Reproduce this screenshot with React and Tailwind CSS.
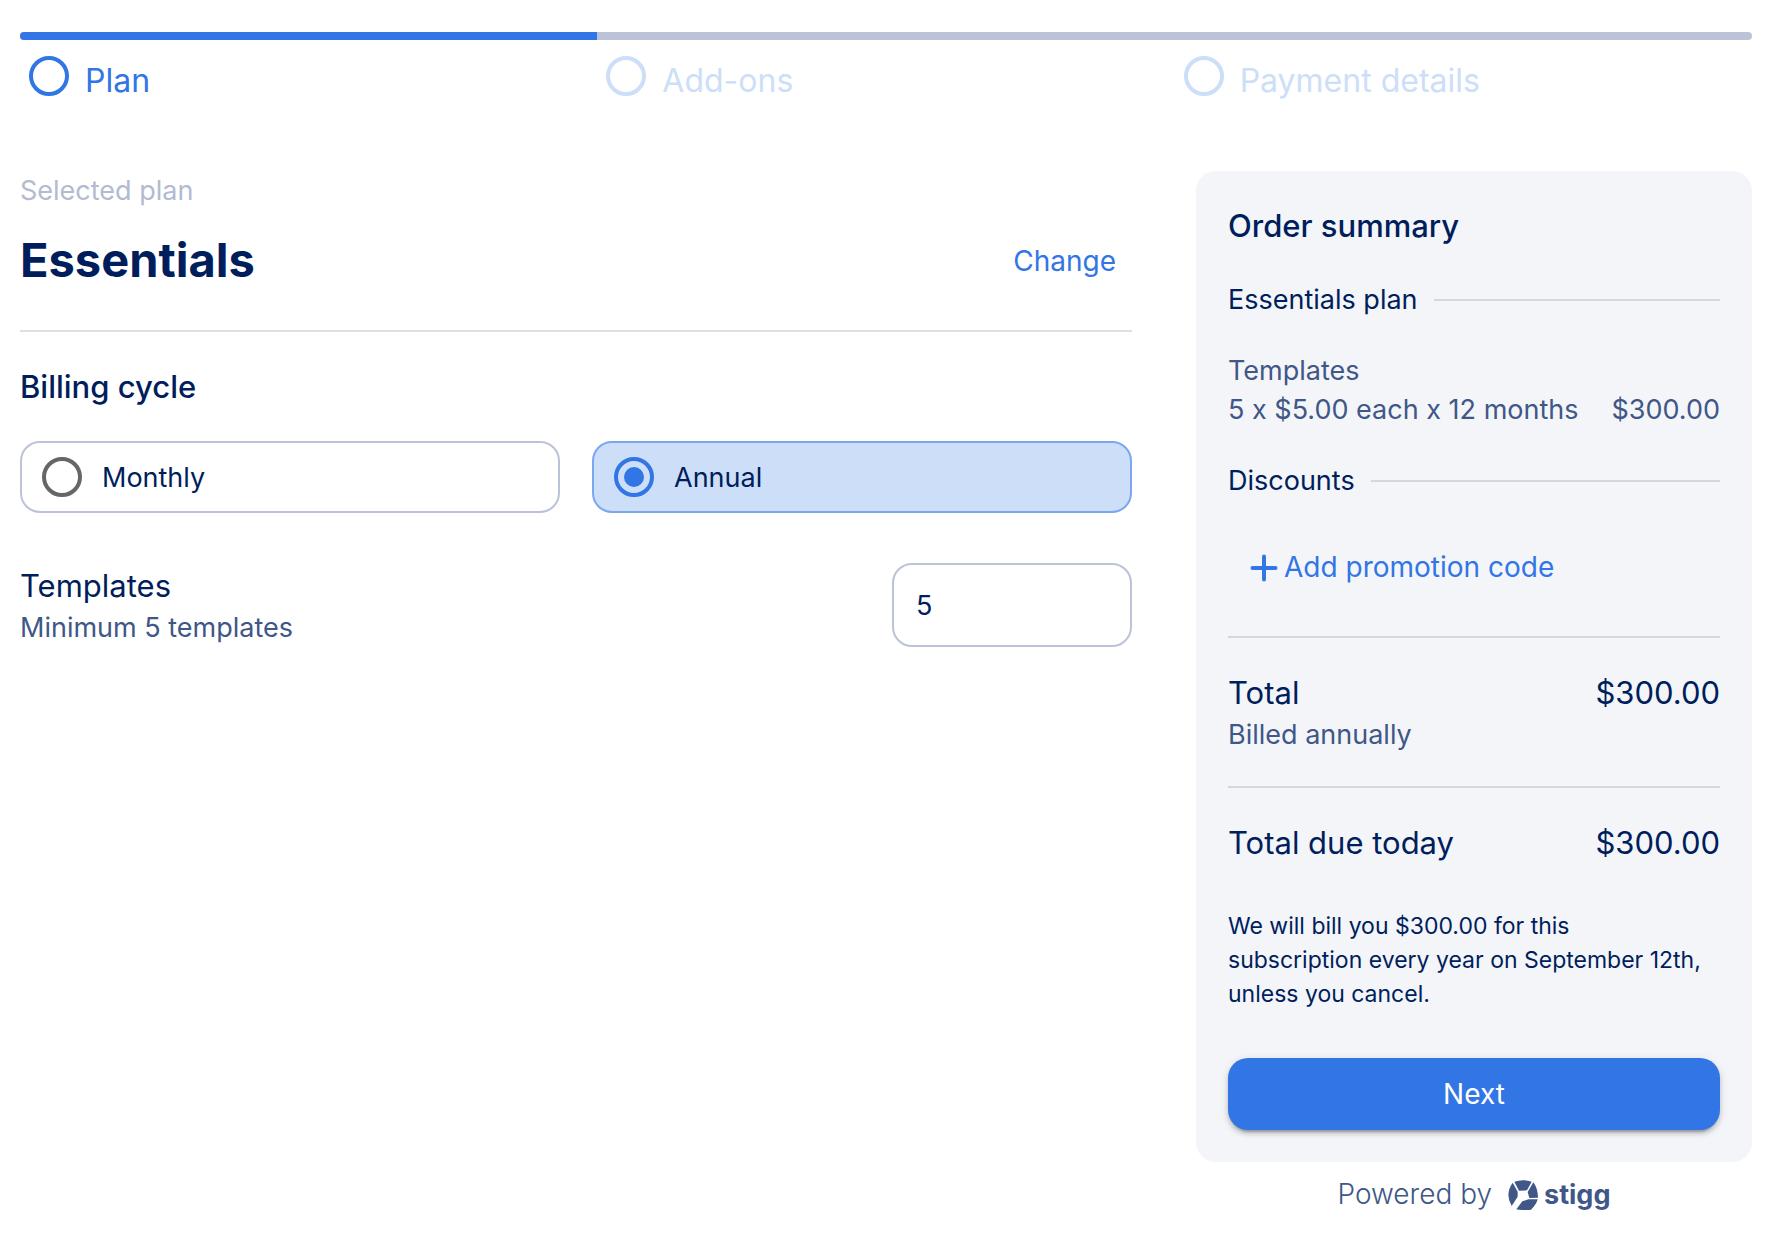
import { useState } from "react";

function Step({ label, active }) {
  return (
    <li className={`flex flex-1 items-center gap-3 pl-[5px] ${active ? "text-[#3275e4]" : "text-[#cddef8]"}`}>
      <svg viewBox="0 0 24 24" className="mb-2 size-12 shrink-0" fill="none" stroke="currentColor" strokeWidth="2" aria-hidden="true">
        <circle cx="12" cy="12" r="9" />
      </svg>
      <span className="pt-0.5 text-[32px] leading-10">{label}</span>
    </li>
  );
}

function CycleOption({ value, label, checked, onSelect }) {
  return (
    <label
      className={`flex h-[72px] cursor-pointer items-center gap-5 rounded-[20px] border-2 px-5 text-[27px] leading-[39px] ${
        checked ? "border-[#7ba7f0] bg-[#cddef8]" : "border-[#bcc3d8] bg-white"
      }`}
    >
      <input type="radio" name="billing-cycle" value={value} checked={checked} onChange={onSelect} className="peer sr-only" />
      <span className={`flex size-10 shrink-0 items-center justify-center rounded-full border-4 ${checked ? "border-[#3275e4]" : "border-[#666666]"}`}>
        {checked && <span className="size-5 rounded-full bg-[#3275e4]" />}
      </span>
      {label}
    </label>
  );
}

function SectionTitle({ children }) {
  return (
    <div className="flex items-center gap-4">
      <h3 className="text-[27px] leading-[39px]">{children}</h3>
      <div className="h-0.5 flex-1 bg-[#d5d7dc]" />
    </div>
  );
}

function StiggMark() {
  return (
    <svg viewBox="0 0 90 90" className="size-[30px]" aria-hidden="true">
      <path
        fill="#405787"
        d="M19 5Q45 -4 71 5L57 31L33 32ZM76 7Q90 26 90 53L64 54L59 36ZM14 8L29 35V50L11 78Q-10 42 14 8ZM62 58H89Q85 74 69 89Q47 92 25 88L43 64Z"
      />
    </svg>
  );
}

export default function App() {
  const [cycle, setCycle] = useState("annual");
  const [quantity, setQuantity] = useState("5");

  return (
    <div className="px-5 pt-8 pb-6 pr-8 font-['Inter',sans-serif] text-[#001e5b]">
      <header>
        <div className="h-2 overflow-hidden rounded-full bg-[#bcc3d8]">
          <div className="h-full w-1/3 bg-[#3275e4]" />
        </div>
        <ol className="flex pt-3">
          <Step label="Plan" active />
          <Step label="Add-ons" />
          <Step label="Payment details" />
        </ol>
      </header>

      <div className="grid grid-cols-[2fr_1fr] items-start gap-16 pt-[63px]">
        <main>
          <p className="text-[27px] leading-[39px] text-[#b3bad1]">Selected plan</p>
          <div className="flex items-center justify-between pt-4">
            <h1 className="text-[47px] leading-[67px] font-bold">Essentials</h1>
            <button type="button" className="px-4 pt-1 text-[28px] leading-[39px] text-[#3275e4]">Change</button>
          </div>
          <hr className="mt-[37px] border-t-2 border-[#e0e0e0]" />

          <h2 className="pt-8 text-[31px] leading-[45px] font-medium">Billing cycle</h2>
          <div className="grid grid-cols-2 gap-8 pt-8">
            <CycleOption value="monthly" label="Monthly" checked={cycle === "monthly"} onSelect={() => setCycle("monthly")} />
            <CycleOption value="annual" label="Annual" checked={cycle === "annual"} onSelect={() => setCycle("annual")} />
          </div>

          <div className="flex items-center justify-between pt-[50px]">
            <label htmlFor="quantity">
              <span className="block text-[31px] leading-[45px]">Templates</span>
              <span className="block text-[27px] leading-[39px] text-[#405787]">Minimum 5 templates</span>
            </label>
            <input
              id="quantity"
              type="text"
              inputMode="numeric"
              value={quantity}
              onChange={(e) => setQuantity(e.target.value)}
              className="h-[84px] w-60 rounded-[20px] border-2 border-[#bcc3d8] px-[22px] text-[27px]"
            />
          </div>
        </main>

        <aside>
          <section className="rounded-[20px] bg-[#f3f5f9] p-8">
            <h2 className="text-[31px] leading-[45px] font-medium">Order summary</h2>
            <div className="pt-8">
              <SectionTitle>Essentials plan</SectionTitle>
            </div>
            <div className="pt-8 text-[27px] leading-[39px] text-[#405787]">
              <p>Templates</p>
              <div className="flex justify-between whitespace-nowrap">
                <span>5 x $5.00 each x 12 months</span>
                <span>$300.00</span>
              </div>
            </div>
            <div className="pt-8">
              <SectionTitle>Discounts</SectionTitle>
            </div>
            <button type="button" className="mt-12 flex items-center gap-1.5 pl-[22px] text-[28px] leading-[39px] text-[#3275e4]">
              <svg viewBox="0 0 28 28" className="size-7" fill="none" stroke="currentColor" strokeWidth="4" strokeLinecap="round" aria-hidden="true">
                <path d="M14 2.5v23M2.5 14h23" />
              </svg>
              Add promotion code
            </button>
            <hr className="mt-[49px] border-t-2 border-[#d5d7dc]" />

            <div className="flex justify-between pt-8 text-[31px] leading-[45px]">
              <span>Total</span>
              <span>$300.00</span>
            </div>
            <p className="text-[27px] leading-[39px] text-[#405787]">Billed annually</p>
            <hr className="mt-8 border-t-2 border-[#d5d7dc]" />

            <div className="flex justify-between pt-8 text-[31px] leading-[45px]">
              <span>Total due today</span>
              <span>$300.00</span>
            </div>
            <p className="pt-11 text-[23px] leading-[34px]">
              We will bill you $300.00 for this
              <br />
              subscription every year on September 12th, unless you cancel.
            </p>
            <button
              type="button"
              className="mt-[47px] h-[72px] w-full rounded-[20px] bg-[#3275e4] text-[28px] text-white shadow-[0_6px_2px_-4px_rgba(0,0,0,0.2),0_4px_4px_rgba(0,0,0,0.14),0_2px_10px_rgba(0,0,0,0.12)]"
            >
              Next
            </button>
          </section>
          <footer className="flex items-center justify-center pt-[13px] text-[#405787]">
            <span className="text-[28px] leading-[39px] font-light">Powered by</span>
            <a href="#stigg" className="flex items-center gap-1.5 pl-4">
              <StiggMark />
              <span className="text-[27px] leading-[39px] font-bold">stigg</span>
            </a>
          </footer>
        </aside>
      </div>
    </div>
  );
}
